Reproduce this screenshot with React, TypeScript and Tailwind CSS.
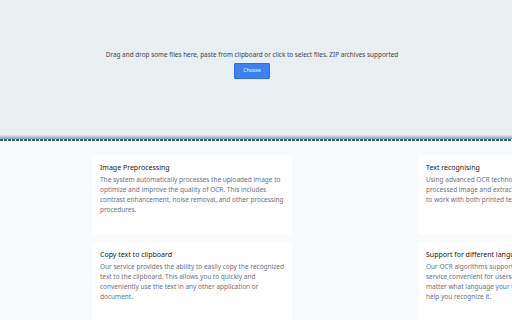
export default function App() {
  const left = [
    {
      title: "Image Preprocessing",
      lines: [
        "The system automatically processes the uploaded image to optimize and improve the quality of OCR. This includes contrast enhancement, noise removal, and other processing procedures.",
      ],
    },
    {
      title: "Copy text to clipboard",
      lines: [
        "Our service provides the ability to easily copy the recognized text to the clipboard. This allows you to quickly and conveniently use the text in any other application or document.",
      ],
    },
  ];
  const right = [
    {
      title: "Text recognising",
      lines: [
        "Using advanced OCR technology, the system recognizes the",
        "processed image and extracts the text from it. It is able",
        "to work with both printed text and handwriting.",
      ],
    },
    {
      title: "Support for different languages",
      lines: [
        "Our OCR algorithms support many languages, making the",
        "service convenient for users all over the world. No",
        "matter what language your text is in, we will be able to",
        "help you recognize it.",
      ],
    },
  ];

  return (
    <div className="w-[512px] h-[320px] overflow-hidden bg-[#f8fafc] font-['Noto_Sans',sans-serif]">
      <div className="h-[135px] bg-[#e9eef1] flex flex-col items-center justify-center pr-[8px] pb-[7px]">
        <p className="text-[6.4px] leading-[10px] text-[#3f4348]">
          Drag and drop some files here, paste from clipboard or click to select files. ZIP archives supported
        </p>
        <button className="mt-[3px] w-[36px] h-[16px] bg-[#3b82f6] border border-[#2f6fe0] rounded-[1px] text-white text-[5px] leading-none">
          Choose
        </button>
      </div>
      <div className="h-[4px] bg-gradient-to-b from-[#e3e9ec] to-[#7fa3b5]" />
      <div className="h-[2px] bg-[repeating-linear-gradient(90deg,#2b6c8c_0_3px,#ffffff_3px_4px)]" />
      <div className="flex gap-[126px] pl-[92px] pt-[14px]">
        <div className="flex flex-col gap-[7px] w-[200px] shrink-0">
          {left.map((c) => (
            <Card key={c.title} title={c.title} lines={c.lines} />
          ))}
        </div>
        <div className="flex flex-col gap-[7px] w-[200px] shrink-0">
          {right.map((c) => (
            <Card key={c.title} title={c.title} lines={c.lines} nowrap />
          ))}
        </div>
      </div>
    </div>
  );
}

function Card(props: { title: string; lines: string[]; nowrap?: boolean }) {
  return (
    <div className="h-[80px] bg-white rounded-[3px] px-[8px] pt-[8px]">
      <h3 className="text-[7px] leading-[10px] font-normal text-[#111827] whitespace-nowrap">{props.title}</h3>
      <p className="mt-[2px] text-[6.5px] leading-[10px] text-[#6b7280]">
        {props.lines.map((l, i) => (
          <span key={i} className={props.nowrap ? "block whitespace-nowrap" : ""}>
            {l}
          </span>
        ))}
      </p>
    </div>
  );
}
